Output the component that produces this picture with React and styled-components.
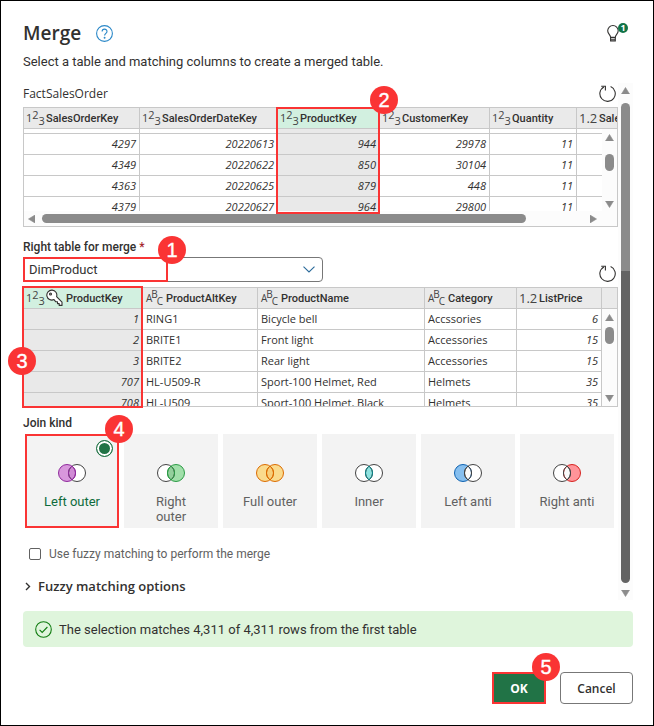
import React, { useState } from "react";
import styled, { createGlobalStyle, css } from "styled-components";

const GlobalStyle = createGlobalStyle`
  *, *::before, *::after { box-sizing: border-box; }
  body { margin: 0; background: #fff; }
  body, button, input, select {
    font-family: "Open Sans", "Noto Sans", sans-serif;
  }
`;

const RED = "#fa3434";
const GREEN = "#217346";
const LINE = "#c8c8c8";
const SCROLL = "#8b8b8b";
const COMPACT = `Roboto, "Open Sans", sans-serif`;

const Dialog = styled.main`
  display: flex;
  flex-direction: column;
  min-height: 100vh;
  padding: 20px 20px 20px 22px;
  border: 1px solid #000;
  color: #323130;
  font-size: 13px;
`;

const Header = styled.header`
  display: flex;
  align-items: center;
  gap: 15px;
  height: 24px;
`;

const Title = styled.h1`
  margin: 0;
  font-size: 19px;
  font-weight: 600;
  line-height: 24px;
`;

const IconButton = styled.button`
  display: flex;
  padding: 0;
  border: 0;
  background: none;
  color: #323130;
  cursor: pointer;
`;

const TipButton = styled(IconButton)`
  position: relative;
  margin-left: auto;
  margin-right: 14px;
`;

const TipCount = styled.span`
  position: absolute;
  top: -2px;
  right: -9px;
  width: 10px;
  height: 10px;
  border-radius: 50%;
  background: #117347;
  color: #fff;
  font-size: 9px;
  font-weight: 700;
  line-height: 10px;
  text-align: center;
`;

const Subtitle = styled.p`
  margin: 6px 0 11px;
  font-family: ${COMPACT};
  line-height: 21px;
`;

const ScrollArea = styled.section`
  display: flex;
`;

const Content = styled.div`
  flex: 1;
  min-width: 0;
`;

const PaneBar = styled.div`
  display: flex;
  align-items: center;
  justify-content: space-between;
  height: 24px;
  padding: 0 2px 4px 0;
`;

const TableName = styled.h2`
  margin: 0;
  font-size: 12px;
  font-weight: 400;
`;

const FieldLabel = styled.label`
  display: block;
  padding-top: 11px;
  font-family: ${COMPACT};
  font-size: 12px;
  font-weight: 500;
  line-height: 19px;

  i {
    color: #a4262c;
    font-style: normal;
  }
`;

const SelectBar = styled.div`
  display: flex;
  align-items: flex-end;
  justify-content: space-between;
  margin-bottom: 5px;
  padding-right: 2px;
`;

const SelectBox = styled.div`
  position: relative;
  display: flex;
  align-items: center;
  flex: 0 1 300px;
`;

const Select = styled.select`
  width: 100%;
  height: 25px;
  padding: 0 24px 0 5px;
  border: 1px solid #777;
  border-radius: 4px;
  background: #fff;
  color: #323130;
  font-family: ${COMPACT};
  font-size: 13px;
  appearance: none;
`;

const SelectArrow = styled.svg`
  position: absolute;
  right: 8px;
  pointer-events: none;
`;

const Callout = styled.div`
  position: absolute;
  z-index: 2;
  border: 2px solid ${RED};
  pointer-events: none;
  ${(p) => p.$area}
`;

const Badge = styled.span`
  position: absolute;
  top: ${(p) => (p.$side === "left" ? "59px" : p.$near ? "-21px" : "-23px")};
  ${(p) => (p.$side === "left" ? "left: -16px;" : p.$near ? "right: -16px;" : "right: -20px;")}
  width: 28px;
  height: 28px;
  border-radius: 50%;
  background: ${RED};
  color: #fff;
  font-family: "Liberation Sans", sans-serif;
  font-size: 20px;
  font-weight: 400;
  line-height: 28px;
  text-align: center;
  -webkit-text-stroke: 0.4px #fff;
`;

const TableWrap = styled.div`
  position: relative;
`;

const Frame = styled.div`
  position: relative;
  height: 120px;
  overflow: hidden;
  border: 1px solid ${LINE};
`;

const Table = styled.table`
  width: 100%;
  table-layout: fixed;
  border-collapse: separate;
  border-spacing: 0;
  font-size: 11px;
`;

const Col = styled.col`
  width: ${(p) => (p.$w ? `${p.$w}px` : "auto")};
`;

const HeadCell = styled.th`
  height: 21px;
  padding: 0 0 0 2px;
  border-right: 1px solid ${LINE};
  border-bottom: 1px solid ${LINE};
  background: ${(p) => (p.$picked ? "#d2f0e0" : "#eaeaea")};
  font-family: ${COMPACT};
  font-weight: 500;
  text-align: left;
  white-space: nowrap;
  overflow: hidden;

  &:last-child { border-right: 0; }
`;

const HeadInner = styled.div`
  display: flex;
  align-items: center;
  gap: 3px;
  height: 20px;
`;

const Cell = styled.td`
  height: ${(p) => (p.$sliver ? "5px" : "21px")};
  padding: 0 3px;
  border-right: 1px solid ${LINE};
  border-bottom: 1px solid ${LINE};
  background: ${(p) => (p.$picked ? "#e9e9e9" : "#fff")};
  line-height: ${(p) => (p.$sliver ? "0" : "20px")};
  white-space: nowrap;
  overflow: hidden;
  ${(p) => p.$num && css`
    font-style: italic;
    text-align: right;
  `}

  &:last-child { border-right: 0; }
`;

const TypeMark = styled.span`
  display: inline-flex;
  align-items: center;
  flex: none;
  width: 17px;
  height: 18px;
  color: #444;
  font-family: "Open Sans", sans-serif;
  font-size: 11px;
  font-weight: 400;
  line-height: 12px;

  span:nth-child(2) { align-self: flex-start; }
  span:nth-child(3) { align-self: flex-end; }
`;

const DecimalMark = styled(TypeMark)`
  font-size: 13px;
`;

const AbcMark = styled(TypeMark)`
  width: 18px;
  padding-left: 1px;
  font-size: 10px;
  line-height: 11px;

  span { margin-right: -1px; }
`;

const VBar = styled.div`
  position: absolute;
  top: 21px;
  right: 0;
  bottom: ${(p) => (p.$short ? "14px" : "0")};
  display: flex;
  flex-direction: column;
  align-items: center;
  width: 15px;
  padding: 5px 0 4px;
  background: #fcfcfc;
`;

const HBar = styled.div`
  position: absolute;
  right: 0;
  bottom: 0;
  left: 0;
  display: flex;
  align-items: center;
  height: 15px;
  padding: 0 20px 0 4px;
  background: #fcfcfc;
`;

const Thumb = styled.div`
  width: 9px;
  height: 17px;
  margin: ${(p) => (p.$gap ? "13px" : "6px")} 0 auto;
  border-radius: 5px;
  background: ${SCROLL};
`;

const HThumb = styled.div`
  width: 85%;
  height: 9px;
  margin: 0 auto 0 7px;
  border-radius: 5px;
  background: ${SCROLL};
`;

const PageBar = styled.div`
  display: flex;
  flex-direction: column;
  align-items: center;
  width: 15px;
  padding: 4px 0 3px;
  background: #fcfcfc;
`;

const PageThumb = styled.div`
  flex: 1;
  width: 9px;
  margin: 9px 0 7px;
  border-radius: 5px;
  background: linear-gradient(${SCROLL} 0 35%, #636363 35% 100%);
`;

const Joins = styled.fieldset`
  min-width: 0;
  margin: 0;
  padding: 0 4px 0 2px;
  border: 0;
`;

const JoinLegend = styled.legend`
  margin-left: -2px;
  padding: 6px 0 1px;
  font-family: ${COMPACT};
  font-size: 12px;
  font-weight: 500;
  line-height: 20px;
`;

const Tiles = styled.div`
  display: grid;
  grid-template-columns: repeat(6, 1fr);
  gap: 5px;
`;

const Tile = styled.label`
  position: relative;
  display: flex;
  flex-direction: column;
  align-items: center;
  min-height: 94px;
  padding: 30px 16px 0;
  background: #f3f3f3;
  color: ${(p) => (p.$on ? "#0f6b3c" : "#616161")};
  font-family: ${COMPACT};
  font-size: 13px;
  line-height: 15px;
  text-align: center;
  cursor: pointer;

  svg { margin-bottom: 12px; }
`;

const TileText = styled.span`
  min-width: 60px;
  padding: ${(p) => (p.$wrap ? "0 10px" : "0")};
`;

const TileRadio = styled.input`
  position: absolute;
  top: 6px;
  right: 6px;
  width: 17px;
  height: 17px;
  margin: 0;
  border-radius: 50%;
  appearance: none;

  &:checked {
    border: 1px solid ${GREEN};
    background: ${GREEN};
    box-shadow: inset 0 0 0 2px #fff;
  }
`;

const CheckRow = styled.label`
  display: flex;
  align-items: center;
  gap: 8px;
  margin: 16px 0 0 6px;
  color: #616161;
  font-family: ${COMPACT};
  font-size: 12px;
  line-height: 20px;
`;

const Check = styled.input`
  width: 12px;
  height: 12px;
  margin: 0;
  border: 1px solid #616161;
  border-radius: 2px;
  background: #fff;
  appearance: none;

  &:checked { background: ${GREEN}; }
`;

const Expander = styled.button`
  display: flex;
  align-items: center;
  gap: 7px;
  margin: 12px 0 3px 2px;
  padding: 0;
  border: 0;
  background: none;
  color: #323130;
  font-size: 13px;
  font-weight: 600;
  line-height: 21px;
`;

const Message = styled.p`
  display: flex;
  align-items: center;
  gap: 7px;
  height: 36px;
  margin: 11px 0 25px;
  padding: 0 12px;
  border-radius: 4px;
  background: #dff5dc;
  font-family: ${COMPACT};
`;

const Footer = styled.footer`
  display: flex;
  justify-content: flex-end;
  gap: 14px;
`;

const ButtonSlot = styled.div`
  position: relative;
`;

const Button = styled.button`
  height: 32px;
  min-width: ${(p) => (p.$primary ? "54px" : "73px")};
  padding: 0;
  border: 1px solid ${(p) => (p.$primary ? GREEN : "#777")};
  border-radius: 4px;
  background: ${(p) => (p.$primary ? GREEN : "#fff")};
  color: ${(p) => (p.$primary ? "#fff" : "#323130")};
  font-size: 12px;
  font-weight: ${(p) => (p.$primary ? 700 : 600)};
`;

function Triangle({ dir }) {
  const shapes = {
    up: "M4.5 0.5 8.5 7h-8z",
    down: "M0.5 0h8l-4 6.5z",
    left: "M0.5 4 7 0v8z",
    right: "M0 0v8l6.5-4z",
  };
  const flat = dir === "up" || dir === "down";
  return (
    <svg width={flat ? 9 : 7} height={flat ? 7 : 8} aria-hidden="true">
      <path d={shapes[dir]} fill={SCROLL} stroke={SCROLL} strokeWidth="0.6" strokeLinejoin="round" />
    </svg>
  );
}

function Refresh() {
  return (
    <svg width="17" height="17" viewBox="0 0 17 17" fill="none" stroke="#323130" strokeWidth="1.1" aria-hidden="true">
      <path d="M11.6 1.6a7.7 7.7 0 1 1-6.7 0.3" />
      <path d="M2.2 1.2h4.2v4.2" />
    </svg>
  );
}

function KeyIcon() {
  return (
    <svg width="17" height="18" viewBox="0 0 17 18" fill="#fff" stroke="#323130" strokeWidth="1.1" strokeLinejoin="round" aria-hidden="true">
      <path d="M10.6 7.6 16 13.2V16.4h-2.8v-1.8h-1.7v-1.8H9.8L8 10.6A5 5 0 1 1 10.6 7.6z" />
      <circle cx="4.5" cy="5" r="1" />
    </svg>
  );
}

function Venn({ kind }) {
  const plain = { fill: "#fff", line: "#424242" };
  const left = "M14 2.1A8.5 8.5 0 1 0 14 15.9A8.5 8.5 0 0 1 14 2.1z";
  const right = "M14 2.1A8.5 8.5 0 1 1 14 15.9A8.5 8.5 0 0 0 14 2.1z";
  const lens = "M14 2.1A8.5 8.5 0 0 1 14 15.9A8.5 8.5 0 0 1 14 2.1z";
  const styles = {
    "left-outer": [["#d897dc", "#8f2a9c"], plain, ["#d08bd5", "#8f2a9c"]],
    "right-outer": [plain, ["#a1dfaa", "#2b9b45"], ["#93cf9c", "#2b9b45"]],
    full: [["#fadb8d", "#db6b00"], ["#fadb8d", "#db6b00"], ["#f7cf7a", "#db6b00"]],
    inner: [plain, plain, ["#8fe3e0", "#0e8387"]],
    "left-anti": [["#86bfef", "#0f62b0"], plain, ["#fafafa", "#424242"]],
    "right-anti": [plain, ["#ff9499", "#d6231f"], ["#fafafa", "#424242"]],
  }[kind].map((s) => (Array.isArray(s) ? { fill: s[0], line: s[1] } : s));
  const [l, r, m] = styles;
  return (
    <svg width="28" height="18" viewBox="0 0 28 18" aria-hidden="true">
      <path d={left} fill={l.fill} />
      <path d={right} fill={r.fill} />
      <path d={lens} fill={m.fill} />
      {kind === "left-outer" ? (
        <>
          <circle cx="19" cy="9" r="8.5" fill="none" stroke={r.line} />
          <circle cx="9" cy="9" r="8.5" fill="none" stroke={l.line} />
        </>
      ) : (
        <>
          <circle cx="9" cy="9" r="8.5" fill="none" stroke={l.line} />
          <circle cx="19" cy="9" r="8.5" fill="none" stroke={r.line} />
        </>
      )}
      <path d={lens} fill="none" stroke={m.line} />
    </svg>
  );
}

function Mark({ type }) {
  if (type === "text") {
    return <AbcMark aria-hidden="true"><span>A</span><span>B</span><span>C</span></AbcMark>;
  }
  if (type === "decimal") return <DecimalMark aria-hidden="true">1.2</DecimalMark>;
  return <TypeMark aria-hidden="true"><span>1</span><span>2</span><span>3</span></TypeMark>;
}

function DataTable({ label, columns, rows, sliver }) {
  return (
    <Table aria-label={label}>
      <colgroup>{columns.map((c, i) => <Col key={i} $w={c.w} />)}</colgroup>
      <thead>
        <tr>
          {columns.map((c, i) => (
            <HeadCell key={i} scope="col" $picked={c.picked}>
              {c.name && (
                <HeadInner>
                  <Mark type={c.type} />
                  {c.isKey && <KeyIcon />}
                  <span>{c.name}</span>
                </HeadInner>
              )}
            </HeadCell>
          ))}
        </tr>
      </thead>
      <tbody>
        {sliver && <tr aria-hidden="true">{columns.map((c, i) => <Cell key={i} $sliver $picked={c.picked} />)}</tr>}
        {rows.map((row, r) => (
          <tr key={r}>
            {columns.map((c, i) => (
              <Cell key={i} $picked={c.picked} $num={c.type !== "text"}>{row[i]}</Cell>
            ))}
          </tr>
        ))}
      </tbody>
    </Table>
  );
}

const salesColumns = [
  { name: "SalesOrderKey", type: "int", w: 116 },
  { name: "SalesOrderDateKey", type: "int", w: 138 },
  { name: "ProductKey", type: "int", w: 102, picked: true },
  { name: "CustomerKey", type: "int", w: 110 },
  { name: "Quantity", type: "int", w: 87 },
  { name: "Sale", type: "decimal" },
];

const salesRows = [
  ["4297", "20220613", "944", "29978", "11"],
  ["4349", "20220622", "850", "30104", "11"],
  ["4363", "20220625", "879", "448", "11"],
  ["4379", "20220627", "964", "29800", "11"],
];

const productColumns = [
  { name: "ProductKey", type: "int", w: 119, picked: true, isKey: true },
  { name: "ProductAltKey", type: "text", w: 115 },
  { name: "ProductName", type: "text" },
  { name: "Category", type: "text", w: 92 },
  { name: "ListPrice", type: "decimal", w: 85 },
  { w: 15 },
];

const productRows = [
  ["1", "RING1", "Bicycle bell", "Accssories", "6"],
  ["2", "BRITE1", "Front light", "Accessories", "15"],
  ["3", "BRITE2", "Rear light", "Accessories", "15"],
  ["707", "HL-U509-R", "Sport-100 Helmet, Red", "Helmets", "35"],
  ["708", "HL-U509", "Sport-100 Helmet, Black", "Helmets", "35"],
];

const joinKinds = [
  ["left-outer", "Left outer"],
  ["right-outer", "Right outer"],
  ["full", "Full outer"],
  ["inner", "Inner"],
  ["left-anti", "Left anti"],
  ["right-anti", "Right anti"],
];

const salesArea = css`top: 0; left: 253px; width: 104px; height: 107px;`;
const selectArea = css`top: 0; left: 0; width: 145px; height: 25px;`;
const productArea = css`top: -1px; left: -1px; width: 121px; height: 122px;`;
const fullArea = css`inset: 0;`;

export default function App() {
  const [join, setJoin] = useState("left-outer");
  return (
    <>
      <GlobalStyle />
      <Dialog>
        <Header>
          <Title>Merge</Title>
          <IconButton aria-label="Help">
            <svg width="17" height="17" viewBox="0 0 17 17" fill="none" stroke="#2b88c8" strokeWidth="1.1" aria-hidden="true">
              <circle cx="8.5" cy="8.5" r="7.9" />
              <path d="M6.1 6.6c0-3.3 4.9-3.2 4.9-0.2 0 1.9-2.4 2-2.4 4.2" />
              <circle cx="8.6" cy="12.7" r="0.4" fill="#2b88c8" />
            </svg>
          </IconButton>
          <TipButton aria-label="Tips">
            <svg width="12" height="17" viewBox="0 0 12 17" fill="none" stroke="#323130" strokeWidth="1.1" aria-hidden="true">
              <path d="M3.6 12.4C3.6 9.6 0.7 9 0.7 5.8a5.2 5.2 0 0 1 10.5 0c0 3.2-2.9 3.8-2.9 6.6z" />
              <path d="M3.6 12.4v3.5h4.7v-3.5M3.6 14.2h4.7" />
            </svg>
            <TipCount>1</TipCount>
          </TipButton>
        </Header>
        <Subtitle>Select a table and matching columns to create a merged table.</Subtitle>

        <ScrollArea>
          <Content>
            <PaneBar>
              <TableName>FactSalesOrder</TableName>
              <IconButton aria-label="Refresh FactSalesOrder"><Refresh /></IconButton>
            </PaneBar>
            <TableWrap>
              <Frame>
                <DataTable label="FactSalesOrder" columns={salesColumns} rows={salesRows} sliver />
                <VBar $short aria-hidden="true">
                  <Triangle dir="up" />
                  <Thumb $gap />
                  <Triangle dir="down" />
                </VBar>
                <HBar aria-hidden="true">
                  <Triangle dir="left" />
                  <HThumb />
                  <Triangle dir="right" />
                </HBar>
              </Frame>
              <Callout $area={salesArea}><Badge>2</Badge></Callout>
            </TableWrap>

            <FieldLabel htmlFor="right-table">Right table for merge <i>*</i></FieldLabel>
            <SelectBar>
              <SelectBox>
                <Select id="right-table" defaultValue="DimProduct">
                  <option>DimProduct</option>
                </Select>
                <SelectArrow width="12" height="7" fill="none" stroke="#2a6a9a" strokeWidth="1.1" aria-hidden="true">
                  <path d="M0.5 0.7 6 6 11.5 0.7" />
                </SelectArrow>
                <Callout $area={selectArea}><Badge>1</Badge></Callout>
              </SelectBox>
              <IconButton aria-label="Refresh DimProduct"><Refresh /></IconButton>
            </SelectBar>
            <TableWrap>
              <Frame>
                <DataTable label="DimProduct" columns={productColumns} rows={productRows} />
                <VBar aria-hidden="true">
                  <Triangle dir="up" />
                  <Thumb />
                  <Triangle dir="down" />
                </VBar>
              </Frame>
              <Callout $area={productArea}><Badge $side="left">3</Badge></Callout>
            </TableWrap>

            <Joins>
              <JoinLegend>Join kind</JoinLegend>
              <Tiles>
                {joinKinds.map(([id, text]) => (
                  <Tile key={id} $on={join === id}>
                    <TileRadio type="radio" name="join" checked={join === id} onChange={() => setJoin(id)} />
                    <Venn kind={id} />
                    <TileText $wrap={id === "right-outer"}>{text}</TileText>
                    {id === "left-outer" && <Callout $area={fullArea}><Badge $near>4</Badge></Callout>}
                  </Tile>
                ))}
              </Tiles>
            </Joins>

            <CheckRow>
              <Check type="checkbox" />
              Use fuzzy matching to perform the merge
            </CheckRow>
            <Expander aria-expanded="false">
              <svg width="6" height="9" fill="none" stroke="#323130" strokeWidth="1.4" aria-hidden="true">
                <path d="M1 1l3.5 3.5L1 8" />
              </svg>
              Fuzzy matching options
            </Expander>
          </Content>
          <PageBar aria-hidden="true">
            <Triangle dir="up" />
            <PageThumb />
            <Triangle dir="down" />
          </PageBar>
        </ScrollArea>

        <Message role="status">
          <svg width="17" height="17" viewBox="0 0 17 17" fill="none" stroke="#107c10" strokeWidth="1.1" aria-hidden="true">
            <circle cx="8.5" cy="8.5" r="7.8" />
            <path d="M4.6 8.8l2.6 2.6 5.2-5.4" />
          </svg>
          The selection matches 4,311 of 4,311 rows from the first table
        </Message>

        <Footer>
          <ButtonSlot>
            <Button $primary>OK</Button>
            <Callout $area={fullArea}><Badge $near>5</Badge></Callout>
          </ButtonSlot>
          <Button>Cancel</Button>
        </Footer>
      </Dialog>
    </>
  );
}
